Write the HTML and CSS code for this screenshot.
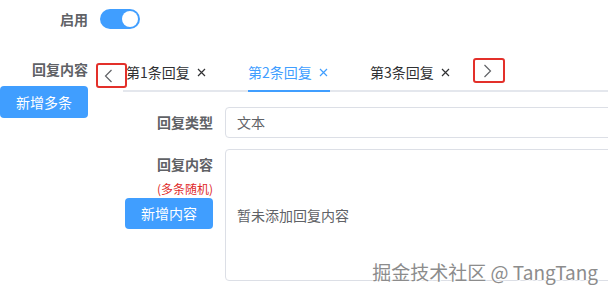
FILE: index.html
```html
<!DOCTYPE html>
<html lang="zh-CN">
<head>
<meta charset="utf-8">
<title>回复设置</title>
<link rel="stylesheet" href="styles.css">
</head>
<body>
<div class="page">
  <div class="form-row row-switch">
    <div class="label">启用</div>
    <div class="switch"><span class="knob"></span></div>
  </div>

  <div class="form-row row-replies">
    <div class="label-col">
      <div class="label label-tall">回复内容</div>
      <button class="btn btn-add-many">新增多条</button>
    </div>
    <div class="tabs">
      <div class="tabs-nav">
        <span class="arrow arrow-prev">
          <svg width="9" height="14" viewBox="0 0 9 14"><polyline points="7.5,1 1.5,7 7.5,13" fill="none" stroke="#606266" stroke-width="1.2"/></svg>
        </span>
        <div class="tabs-viewport">
          <div class="tabs-list">
            <div class="tab"><span class="tab-inner">第1条回复<i class="close"><svg width="9" height="9" viewBox="0 0 9 9"><path d="M1 1L8 8M8 1L1 8" stroke="currentColor" stroke-width="1.2"/></svg></i></span></div>
            <div class="tab active"><span class="tab-inner">第2条回复<i class="close"><svg width="9" height="9" viewBox="0 0 9 9"><path d="M1 1L8 8M8 1L1 8" stroke="currentColor" stroke-width="1.2"/></svg></i></span></div>
            <div class="tab"><span class="tab-inner">第3条回复<i class="close"><svg width="9" height="9" viewBox="0 0 9 9"><path d="M1 1L8 8M8 1L1 8" stroke="currentColor" stroke-width="1.2"/></svg></i></span></div>
          </div>
        </div>
        <span class="arrow arrow-next">
          <svg width="9" height="14" viewBox="0 0 9 14"><polyline points="1.5,1 7.5,7 1.5,13" fill="none" stroke="#606266" stroke-width="1.2"/></svg>
        </span>
      </div>

      <div class="pane">
        <div class="sub-row">
          <div class="sub-label">回复类型</div>
          <div class="input">文本</div>
        </div>
        <div class="sub-row sub-row-content">
          <div class="sub-label-col">
            <div class="sub-label">回复内容</div>
            <div class="hint">(多条随机)</div>
            <button class="btn btn-add-content">新增内容</button>
          </div>
          <div class="textarea">暂未添加回复内容</div>
        </div>
      </div>
    </div>
  </div>
</div>
<div class="watermark">掘金技术社区 @ TangTang</div>
</body>
</html>
```

FILE: styles.css
```css
html, body {
  margin: 0;
  padding: 0;
  overflow: hidden;
  background: #fff;
}
body {
  width: 608px;
  height: 298px;
  position: relative;
  font-family: "Noto Sans CJK SC", "Liberation Sans", sans-serif;
  font-size: 14px;
  color: #606266;
}
.page {
  width: 608px;
  overflow: hidden;
  display: flex;
  flex-direction: column;
}
.form-row {
  display: flex;
}
.row-switch {
  height: 38px;
  align-items: center;
}
.label {
  width: 88px;
  flex: none;
  text-align: right;
  font-weight: bold;
  color: #606266;
  line-height: 20px;
}
.row-switch .label {
  margin-right: 12px;
}
.switch {
  width: 40px;
  height: 20px;
  border-radius: 10px;
  background: #409eff;
  display: flex;
  align-items: center;
  justify-content: flex-end;
  padding-right: 2px;
  box-sizing: border-box;
}
.knob {
  width: 16px;
  height: 16px;
  border-radius: 50%;
  background: #fff;
}
.row-replies {
  margin-top: 14px;
}
.label-col {
  width: 96px;
  flex: none;
  display: flex;
  flex-direction: column;
}
.label-tall {
  height: 34px;
  line-height: 34px;
}
.btn {
  border: none;
  border-radius: 4px;
  background: #409eff;
  color: #fff;
  font-family: "Noto Sans CJK SC", "Liberation Sans", sans-serif;
  font-size: 14px;
  width: 88px;
  height: 32px;
  padding: 0;
  line-height: 32px;
}
.tabs {
  width: 512px;
  flex: none;
  display: flex;
  flex-direction: column;
}
.tabs-nav {
  position: relative;
  display: flex;
  height: 40px;
}
.tabs-nav::after {
  content: "";
  position: absolute;
  left: 27px;
  right: 0;
  bottom: 0;
  height: 2px;
  background: #e4e7ed;
}
.arrow {
  flex: none;
  box-sizing: border-box;
  border: 2px solid #e3302a;
  border-radius: 3px;
  display: flex;
  align-items: center;
  height: 25px;
}
.arrow-prev {
  width: 31px;
  margin-top: 11px;
  padding-left: 6px;
}
.arrow-next {
  width: 32px;
  margin-top: 6px;
  padding-left: 8px;
}
.tabs-viewport {
  width: 346px;
  flex: none;
  overflow: hidden;
  position: relative;
  z-index: 1;
}
.tabs-list {
  display: flex;
  margin-left: -21px;
  white-space: nowrap;
}
.tab {
  padding: 0 20px;
  height: 40px;
  color: #303133;
}
.tab-inner {
  display: flex;
  align-items: center;
  height: 40px;
  box-sizing: border-box;
  width: 82px;
}
.tab.active {
  color: #409eff;
}
.tab.active .tab-inner {
  border-bottom: 2px solid #409eff;
  padding-top: 2px;
}
.close {
  display: flex;
  align-items: center;
  justify-content: center;
  width: 14px;
  height: 14px;
  margin-left: 5px;
  color: #303133;
}
.tab.active .close {
  color: #409eff;
}
.pane {
  margin-top: 15px;
  display: flex;
  flex-direction: column;
  gap: 11px;
}
.sub-row {
  display: flex;
}
.sub-label {
  width: 117px;
  flex: none;
  text-align: right;
  font-weight: bold;
  line-height: 31px;
  height: 31px;
  color: #606266;
}
.sub-label-col {
  width: 117px;
  flex: none;
  display: flex;
  flex-direction: column;
  align-items: flex-end;
}
.hint {
  font-size: 12px;
  line-height: 18px;
  color: #e02a2a;
}
.btn-add-content {
  height: 31px;
  line-height: 31px;
}
.input {
  margin-left: 12px;
  width: 420px;
  flex: none;
  height: 31px;
  box-sizing: border-box;
  border: 1px solid #dcdfe6;
  border-radius: 4px;
  padding: 0 11px;
  line-height: 29px;
  color: #606266;
}
.textarea {
  margin-left: 12px;
  width: 420px;
  flex: none;
  height: 132px;
  box-sizing: border-box;
  border: 1px solid #dcdfe6;
  border-radius: 4px;
  padding: 0 11px;
  display: flex;
  align-items: center;
  color: #606266;
}
.watermark {
  position: absolute;
  right: 10px;
  bottom: 14px;
  font-size: 19px;
  line-height: 24px;
  color: #8c8c8c;
  font-family: "Noto Sans CJK SC", "Liberation Sans", sans-serif;
  text-shadow: 0 0 2px #fff, 0 0 2px #fff, 1px 1px 1px #fff;
}
```
